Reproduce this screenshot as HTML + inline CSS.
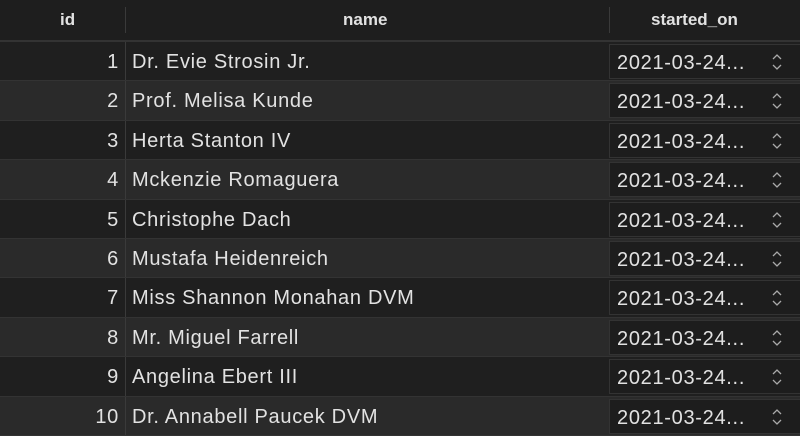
<!DOCTYPE html>
<html><head><style>
*{margin:0;padding:0;box-sizing:border-box}
body{width:800px;height:436px;overflow:hidden;background:#1e1e1e;font-family:"Liberation Sans",sans-serif;color:#e2e2e2}
.hdr{position:absolute;left:0;top:0;width:800px;height:42px;background:#1e1e1e;border-bottom:2px solid #333;font-weight:bold;font-size:17px}
.hdr div{position:absolute;top:10px}
.sep{position:absolute;top:7px;width:1px;height:26px;background:#3a3a3a}
.row{position:absolute;left:0;width:800px;height:39.4px;font-size:20px;letter-spacing:0.7px;border-bottom:1px solid #333}
.row .id{position:absolute;left:0;width:119px;text-align:right;top:9px}
.row .nm{position:absolute;left:132px;top:9px}
.row .vl{position:absolute;left:125px;top:0;width:1px;height:100%;background:#3a3a3a}
.row .dt{position:absolute;left:609px;top:2px;width:191px;height:35px;background:#1d1d1d;border:1px solid #333;border-right:none}
.row .dt span{position:absolute;left:7px;top:7px}
.row .dt svg{position:absolute;left:161px;top:7px}
</style></head><body>
<div class="hdr"><div style="left:60px">id</div><div style="left:343px">name</div><div style="left:651px">started_on</div>
<span class="sep" style="left:125px"></span><span class="sep" style="left:609px"></span></div>
<script>
const n=["Dr. Evie Strosin Jr.","Prof. Melisa Kunde","Herta Stanton IV","Mckenzie Romaguera","Christophe Dach","Mustafa Heidenreich","Miss Shannon Monahan DVM","Mr. Miguel Farrell","Angelina Ebert III","Dr. Annabell Paucek DVM"];
let h="";n.forEach((s,i)=>{h+=`<div class="row" style="top:${42+i*39.4}px;background:${i%2?'#2a2a2a':'#1f1f1f'}"><div class="id">${i+1}</div><div class="vl"></div><div class="nm">${s}</div><div class="dt"><span>2021-03-24...</span><svg width="12" height="20" viewBox="0 0 12 20"><path d="M2 7L6 3L10 7M2 13L6 17L10 13" fill="none" stroke="#aaa" stroke-width="1.3"/></svg></div></div>`});
document.write(h);
</script>
</body></html>
